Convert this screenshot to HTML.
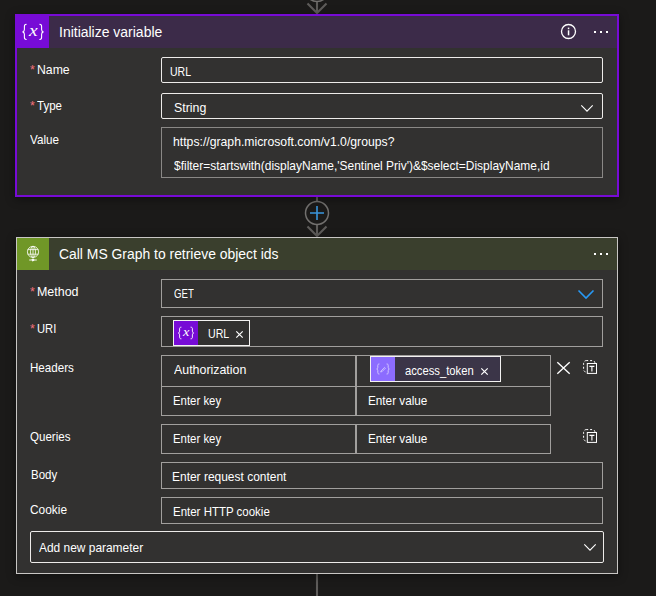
<!DOCTYPE html>
<html lang="en"><head><meta charset="utf-8"><title>Logic App designer</title>
<style>
html,body{margin:0;padding:0;}
body{width:656px;height:596px;overflow:hidden;background:#1b1a19;position:relative;font-family:"Liberation Sans",sans-serif;}
.t{position:absolute;transform-origin:0 0;white-space:pre;line-height:20px;font-family:"Liberation Sans",sans-serif;}
.abs{position:absolute;box-sizing:border-box;}
.card{position:absolute;box-sizing:border-box;background:#323130;}
.inp{position:absolute;box-sizing:border-box;border:1px solid #a19f9d;background:#323130;}
.inpw{position:absolute;box-sizing:border-box;border:1px solid #edebe9;border-radius:2px;background:#323130;}
svg{position:absolute;overflow:visible;}
</style></head>
<body>
<!-- connectors -->
<svg width="656" height="596" style="left:0;top:0" viewBox="0 0 656 596">
  <g fill="none" stroke="#5e5c5a" stroke-width="2.1">
    <circle cx="317" cy="-10" r="11.5" fill="#1b1a19" stroke="#72706e" stroke-width="1.5"/>
    <path d="M317 2V13M307.5 3.5L317 13L326.5 3.5"/>
    <path d="M317 197V201"/>
    <path d="M317 225V236M307.5 226.5L317 236L326.5 226.5"/>
    <path d="M317 574V596"/>
  </g>
  <circle cx="317" cy="213" r="11.5" fill="#1b1a19" stroke="#72706e" stroke-width="1.5"/>
  <path d="M310 213H324M317 206V220" stroke="#3a96dd" stroke-width="1.6" fill="none"/>
</svg>

<!-- card 1 -->
<div class="card" style="left:15px;top:14px;width:604px;height:183px;border:2px solid #770bd6;box-shadow:0 2px 9px rgba(0,0,0,.42)">
</div>
<div class="abs" style="left:17px;top:16px;width:600px;height:32px;background:#3c2b49"></div>
<div class="abs" style="left:17px;top:16px;width:32px;height:32px;background:#770bd6"></div>
<svg style="left:17px;top:16px" width="32" height="32" viewBox="0 0 32 32">
  <g fill="none" stroke="#fff" stroke-width="1.1" stroke-linecap="round">
    <path d="M9.2 8.3C7.6 8.3 7.4 9.2 7.4 10.5V13.5C7.4 14.8 6.8 15.6 5.6 15.9C6.8 16.2 7.4 17 7.4 18.3V21.3C7.4 22.6 7.6 23.5 9.2 23.5"/>
    <path d="M22.8 8.3C24.4 8.3 24.6 9.2 24.6 10.5V13.5C24.6 14.8 25.2 15.6 26.4 15.9C25.2 16.2 24.6 17 24.6 18.3V21.3C24.6 22.6 24.4 23.5 22.8 23.5"/>
  </g>
  <text transform="translate(16.3 20.4) scale(1.22 1)" x="0" y="0" text-anchor="middle" font-family="Liberation Serif, serif" font-style="italic" font-size="16" fill="#fff">x</text>
</svg>
<!-- info + dots -->
<svg style="left:560px;top:23px" width="17" height="17" viewBox="0 0 17 17">
  <circle cx="8.5" cy="8.5" r="7" fill="none" stroke="#fff" stroke-width="1.3"/>
  <rect x="7.8" y="7.3" width="1.5" height="5" fill="#fff"/><rect x="7.8" y="4.6" width="1.5" height="1.6" fill="#fff"/>
</svg>
<div class="abs" style="left:594px;top:31px;width:2px;height:2px;background:#fff;box-shadow:6px 0 #fff,12px 0 #fff"></div>

<div class="inpw" style="left:161px;top:57px;width:442px;height:26px"></div>
<div class="inpw" style="left:161px;top:93px;width:442px;height:26px"></div>
<svg style="left:581px;top:104.5px" width="12" height="7" viewBox="0 0 12 7"><path d="M0.3 0.4L6 6.2L11.7 0.4" fill="none" stroke="#fff" stroke-width="1.1"/></svg>
<div class="inp" style="left:161px;top:127px;width:442px;height:51px;border-color:#8a8886"></div>

<!-- card 2 -->
<div class="card" style="left:16px;top:237px;width:602px;height:337px;border:1px solid #c8c6c4;box-shadow:0 2px 9px rgba(0,0,0,.42)"></div>
<div class="abs" style="left:17px;top:238px;width:600px;height:32px;background:#3a3f2d"></div>
<div class="abs" style="left:17px;top:238px;width:32px;height:32px;background:#709727"></div>
<svg style="left:17px;top:238px" width="32" height="32" viewBox="0 0 32 32">
  <g fill="none" stroke="#fff" stroke-width="0.8">
    <circle cx="16" cy="13.9" r="5.6"/>
    <ellipse cx="16" cy="13.9" rx="2.5" ry="5.6"/>
    <path d="M10.7 11.6H21.3M10.7 16.2H21.3M16 8.3V19.5"/>
    <path d="M12.2 22H19.8M14.8 22L16 20.7L17.2 22L16 23.2Z" stroke-width="0.9" fill="#fff"/>
  </g>
</svg>
<div class="abs" style="left:594px;top:253px;width:2px;height:2px;background:#fff;box-shadow:6px 0 #fff,12px 0 #fff"></div>

<div class="inp" style="left:161px;top:279px;width:442px;height:29px"></div>
<svg style="left:578px;top:290px" width="16" height="9" viewBox="0 0 16 9"><path d="M0.5 0.5L8 8L15.5 0.5" fill="none" stroke="#2899f5" stroke-width="1.6"/></svg>
<div class="inp" style="left:161px;top:316px;width:442px;height:31px"></div>
<!-- URL token -->
<div class="abs" style="left:173px;top:320px;width:77px;height:26px;border:1px solid #f3f2f1;background:#323130"></div>
<div class="abs" style="left:174px;top:321px;width:24px;height:24px;background:#770bd6"></div>
<svg style="left:174px;top:321px" width="24" height="24" viewBox="0 0 24 24">
  <g fill="none" stroke="#fff" stroke-width="0.9" stroke-linecap="round">
    <path d="M7 6.2C5.8 6.2 5.6 6.9 5.6 7.9V10.2C5.6 11.2 5.2 11.8 4.3 12C5.2 12.2 5.6 12.8 5.6 13.8V16.1C5.6 17.1 5.8 17.8 7 17.8"/>
    <path d="M17 6.2C18.2 6.2 18.4 6.9 18.4 7.9V10.2C18.4 11.2 18.8 11.8 19.7 12C18.8 12.2 18.4 12.8 18.4 13.8V16.1C18.4 17.1 18.2 17.8 17 17.8"/>
  </g>
  <text transform="translate(12.2 15.3) scale(1.2 1)" x="0" y="0" text-anchor="middle" font-family="Liberation Serif, serif" font-style="italic" font-size="12" fill="#fff">x</text>
</svg>
<svg style="left:236px;top:331px" width="7" height="7" viewBox="0 0 7 7"><path d="M0.3 0.3L6.7 6.7M6.7 0.3L0.3 6.7" stroke="#fff" stroke-width="1.2" fill="none"/></svg>

<!-- headers table -->
<div class="inp" style="left:161px;top:355px;width:195px;height:32px"></div>
<div class="inp" style="left:356px;top:355px;width:195px;height:32px"></div>
<div class="inp" style="left:161px;top:386px;width:195px;height:30px"></div>
<div class="inp" style="left:356px;top:386px;width:195px;height:30px"></div>
<!-- access_token token -->
<div class="abs" style="left:370px;top:356px;width:131px;height:26px;border:1px solid #f3f2f1;background:#3b3548"></div>
<div class="abs" style="left:371px;top:357px;width:24px;height:24px;background:#8c6cff"></div>
<svg style="left:371px;top:357px" width="24" height="24" viewBox="0 0 24 24">
  <g fill="none" stroke="#d9ceff" stroke-width="0.9" stroke-linecap="round">
    <path d="M8 7C7 7 6.8 7.6 6.8 8.4V10.4C6.8 11.3 6.4 11.8 5.7 12C6.4 12.2 6.8 12.7 6.8 13.6V15.6C6.8 16.4 7 17 8 17"/>
    <path d="M16 7C17 7 17.2 7.6 17.2 8.4V10.4C17.2 11.3 17.6 11.8 18.3 12C17.6 12.2 17.2 12.7 17.2 13.6V15.6C17.2 16.4 17 17 16 17"/>
    <path d="M10.3 13.8L13.5 10.4L14.4 11.2L11.2 14.5L10 14.9Z" stroke-width="0.8"/>
  </g>
</svg>
<svg style="left:481px;top:368px" width="7" height="7" viewBox="0 0 7 7"><path d="M0.3 0.3L6.7 6.7M6.7 0.3L0.3 6.7" stroke="#fff" stroke-width="1.2" fill="none"/></svg>
<!-- X icon -->
<svg style="left:557px;top:362px" width="13" height="12" viewBox="0 0 13 12"><path d="M0.3 0.2L12.7 11.8M12.7 0.2L0.3 11.8" stroke="#fff" stroke-width="1.35" fill="none"/></svg>
<!-- T icons -->
<svg style="left:583px;top:360px" width="15" height="14" viewBox="0 0 15 14">
  <rect x="0.6" y="0.6" width="11.4" height="11.4" rx="2.6" fill="none" stroke="#fff" stroke-width="1" stroke-dasharray="2 1.9"/>
  <rect x="4.3" y="3.5" width="9.2" height="9.9" fill="#323130" stroke="#fff" stroke-width="1"/>
  <path d="M6.4 6.3H11.4M8.9 6.3V11.4" stroke="#fff" stroke-width="1.15" fill="none"/>
</svg>
<svg style="left:583px;top:429px" width="15" height="14" viewBox="0 0 15 14">
  <rect x="0.6" y="0.6" width="11.4" height="11.4" rx="2.6" fill="none" stroke="#fff" stroke-width="1" stroke-dasharray="2 1.9"/>
  <rect x="4.3" y="3.5" width="9.2" height="9.9" fill="#323130" stroke="#fff" stroke-width="1"/>
  <path d="M6.4 6.3H11.4M8.9 6.3V11.4" stroke="#fff" stroke-width="1.15" fill="none"/>
</svg>

<!-- queries -->
<div class="inp" style="left:161px;top:424px;width:195px;height:30px"></div>
<div class="inp" style="left:356px;top:424px;width:195px;height:30px"></div>
<!-- body / cookie -->
<div class="inp" style="left:161px;top:462px;width:442px;height:27px"></div>
<div class="inp" style="left:161px;top:497px;width:442px;height:27px"></div>
<!-- add new parameter -->
<div class="inpw" style="left:30px;top:531px;width:574px;height:32px"></div>
<svg style="left:584px;top:543.5px" width="12" height="7" viewBox="0 0 12 7"><path d="M0.3 0.4L6 6.2L11.7 0.4" fill="none" stroke="#fff" stroke-width="1.1"/></svg>

<span class="t" style="left:58.50px;top:22.15px;transform:scaleX(0.9980);font-size:14px;color:#ffffff">Initialize variable</span>
<span class="t" style="left:30.30px;top:59.50px;transform:scaleX(0.9600);font-size:13px;color:#f1707b">*</span>
<span class="t" style="left:36.76px;top:59.50px;transform:scaleX(0.9424);font-size:13px;color:#ffffff">Name</span>
<span class="t" style="left:30.30px;top:95.50px;transform:scaleX(0.9600);font-size:13px;color:#f1707b">*</span>
<span class="t" style="left:37.40px;top:95.50px;transform:scaleX(0.8857);font-size:13px;color:#ffffff">Type</span>
<span class="t" style="left:30.00px;top:129.50px;transform:scaleX(0.8969);font-size:13px;color:#ffffff">Value</span>
<span class="t" style="left:170.39px;top:61.50px;transform:scaleX(0.8080);font-size:13px;color:#ffffff">URL</span>
<span class="t" style="left:173.85px;top:97.50px;transform:scaleX(0.9500);font-size:13px;color:#ffffff">String</span>
<span class="t" style="left:173.36px;top:131.50px;transform:scaleX(0.9402);font-size:13px;color:#ffffff">https://graph.microsoft.com/v1.0/groups?</span>
<span class="t" style="left:174.00px;top:155.50px;transform:scaleX(0.9203);font-size:13px;color:#ffffff">$filter=startswith(displayName,'Sentinel Priv')&amp;$select=DisplayName,id</span>
<span class="t" style="left:58.51px;top:244.15px;transform:scaleX(0.9932);font-size:14px;color:#ffffff">Call MS Graph to retrieve object ids</span>
<span class="t" style="left:30.30px;top:281.50px;transform:scaleX(0.9600);font-size:13px;color:#f1707b">*</span>
<span class="t" style="left:37.34px;top:281.50px;transform:scaleX(0.9571);font-size:13px;color:#ffffff">Method</span>
<span class="t" style="left:30.30px;top:318.50px;transform:scaleX(0.9600);font-size:13px;color:#f1707b">*</span>
<span class="t" style="left:37.44px;top:318.50px;transform:scaleX(0.8600);font-size:13px;color:#ffffff">URI</span>
<span class="t" style="left:30.31px;top:357.50px;transform:scaleX(0.8917);font-size:13px;color:#ffffff">Headers</span>
<span class="t" style="left:30.00px;top:426.50px;transform:scaleX(0.8889);font-size:13px;color:#ffffff">Queries</span>
<span class="t" style="left:30.52px;top:464.50px;transform:scaleX(0.8828);font-size:13px;color:#ffffff">Body</span>
<span class="t" style="left:30.20px;top:499.50px;transform:scaleX(0.9150);font-size:13px;color:#ffffff">Cookie</span>
<span class="t" style="left:173.60px;top:283.50px;transform:scaleX(0.7407);font-size:13px;color:#ffffff">GET</span>
<span class="t" style="left:207.98px;top:323.50px;transform:scaleX(0.8160);font-size:13px;color:#ffffff">URL</span>
<span class="t" style="left:174.10px;top:359.50px;transform:scaleX(0.9533);font-size:13px;color:#ffffff">Authorization</span>
<span class="t" style="left:405.10px;top:360.50px;transform:scaleX(0.8646);font-size:13px;color:#ffffff">access_token</span>
<span class="t" style="left:173.22px;top:390.50px;transform:scaleX(0.8759);font-size:13px;color:#ffffff">Enter key</span>
<span class="t" style="left:367.90px;top:390.50px;transform:scaleX(0.9031);font-size:13px;color:#ffffff">Enter value</span>
<span class="t" style="left:173.22px;top:428.50px;transform:scaleX(0.8759);font-size:13px;color:#ffffff">Enter key</span>
<span class="t" style="left:367.90px;top:428.50px;transform:scaleX(0.9031);font-size:13px;color:#ffffff">Enter value</span>
<span class="t" style="left:172.48px;top:466.50px;transform:scaleX(0.9203);font-size:13px;color:#ffffff">Enter request content</span>
<span class="t" style="left:172.52px;top:501.50px;transform:scaleX(0.8833);font-size:13px;color:#ffffff">Enter HTTP cookie</span>
<span class="t" style="left:39.30px;top:537.50px;transform:scaleX(0.9177);font-size:13px;color:#ffffff">Add new parameter</span>
</body></html>
